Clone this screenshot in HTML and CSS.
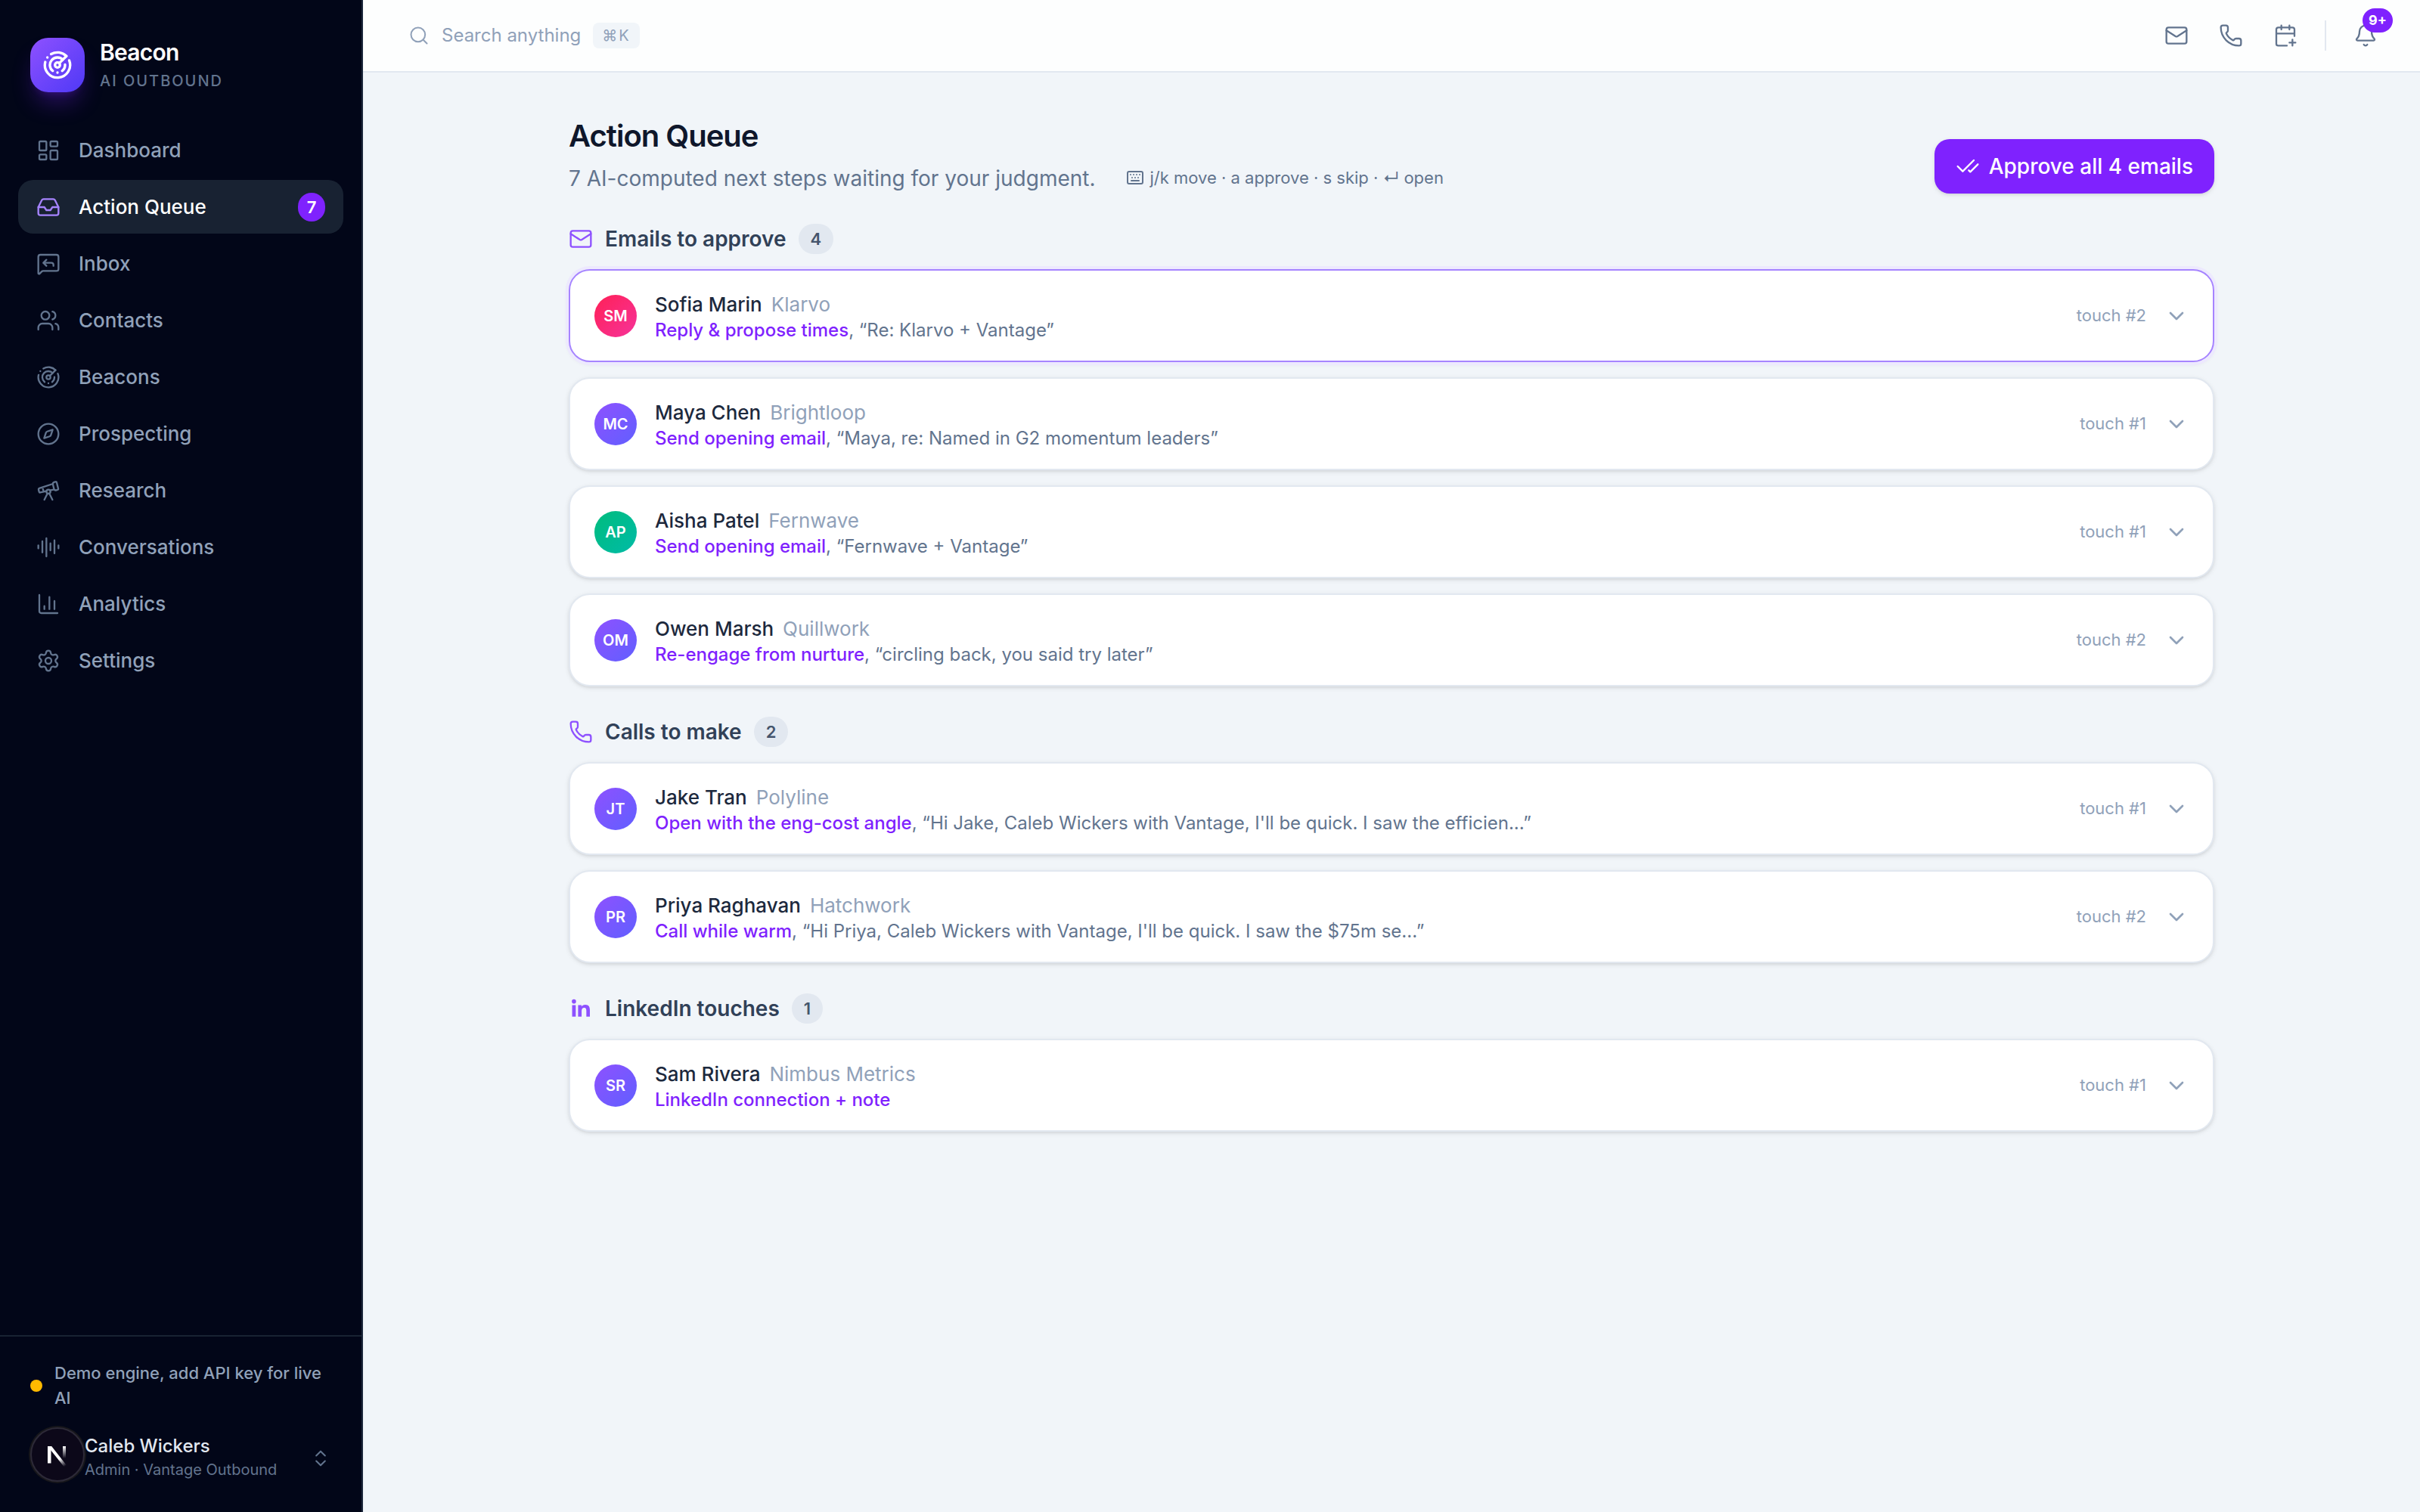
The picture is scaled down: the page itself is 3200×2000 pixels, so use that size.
FILE: index.html
```html
<!DOCTYPE html>
<html lang="en">
<head>
<meta charset="utf-8">
<title>Action Queue – Beacon</title>
<meta name="viewport" content="width=device-width, initial-scale=1">
<link rel="stylesheet" href="styles.css">
</head>
<body>
<svg class="sprite" aria-hidden="true">
  <symbol id="radar" viewBox="0 0 24 24"><path d="M19.07 4.93A10 10 0 0 0 6.99 3.34M4 6h.01M2.29 9.62A10 10 0 1 0 21.31 8.35M16.24 7.76A6 6 0 1 0 8.23 16.67M12 18h.01M17.99 11.66A6 6 0 0 1 15.77 16.67"/><circle cx="12" cy="12" r="2"/><path d="m13.41 10.59 5.66-5.66"/></symbol>
  <symbol id="dashboard" viewBox="0 0 24 24"><rect x="3" y="3" width="7" height="9" rx="1"/><rect x="14" y="3" width="7" height="5" rx="1"/><rect x="14" y="12" width="7" height="9" rx="1"/><rect x="3" y="16" width="7" height="5" rx="1"/></symbol>
  <symbol id="inbox" viewBox="0 0 24 24"><path d="M22 12h-6l-2 3h-4l-2-3H2"/><path d="M5.45 5.11 2 12v6a2 2 0 0 0 2 2h16a2 2 0 0 0 2-2v-6l-3.45-6.89A2 2 0 0 0 16.76 4H7.24a2 2 0 0 0-1.79 1.11z"/></symbol>
  <symbol id="reply" viewBox="0 0 24 24"><path d="M22 17a2 2 0 0 1-2 2H6.828a2 2 0 0 0-1.414.586l-2.202 2.202A.71.71 0 0 1 2 21.286V5a2 2 0 0 1 2-2h16a2 2 0 0 1 2 2z"/><path d="m10 8-3 3 3 3M17 14v-1a2 2 0 0 0-2-2H7"/></symbol>
  <symbol id="users" viewBox="0 0 24 24"><path d="M16 21v-2a4 4 0 0 0-4-4H6a4 4 0 0 0-4 4v2M16 3.128a4 4 0 0 1 0 7.744M22 21v-2a4 4 0 0 0-3-3.87"/><circle cx="9" cy="7" r="4"/></symbol>
  <symbol id="compass" viewBox="0 0 24 24"><circle cx="12" cy="12" r="10"/><path d="m16.24 7.76-1.804 5.411a2 2 0 0 1-1.265 1.265L7.76 16.24l1.804-5.411a2 2 0 0 1 1.265-1.265z"/></symbol>
  <symbol id="telescope" viewBox="0 0 24 24"><path d="m10.065 12.493-6.18 1.318a.934.934 0 0 1-1.108-.702l-.537-2.15a1.07 1.07 0 0 1 .691-1.265l13.504-4.44M13.56 11.747l4.332-.924M16 21l-3.105-6.21M16.485 5.94a2 2 0 0 1 1.455-2.425l1.09-.272a1 1 0 0 1 1.212.727l1.515 6.06a1 1 0 0 1-.727 1.213l-1.09.272a2 2 0 0 1-2.425-1.455zM6.158 8.633l1.114 4.456M8 21l3.105-6.21"/><circle cx="12" cy="13" r="2"/></symbol>
  <symbol id="audio" viewBox="0 0 24 24"><path d="M2 10v3M6 6v11M10 3v18M14 8v7M18 5v13M22 10v3"/></symbol>
  <symbol id="chart" viewBox="0 0 24 24"><path d="M3 3v16a2 2 0 0 0 2 2h16M18 17V9M13 17V5M8 17v-3"/></symbol>
  <symbol id="gear" viewBox="0 0 24 24"><path d="M9.671 4.136a2.34 2.34 0 0 1 4.659 0 2.34 2.34 0 0 0 3.319 1.915 2.34 2.34 0 0 1 2.33 4.033 2.34 2.34 0 0 0 0 3.831 2.34 2.34 0 0 1-2.33 4.033 2.34 2.34 0 0 0-3.319 1.915 2.34 2.34 0 0 1-4.659 0 2.34 2.34 0 0 0-3.32-1.915 2.34 2.34 0 0 1-2.33-4.033 2.34 2.34 0 0 0 0-3.831A2.34 2.34 0 0 1 6.35 6.051a2.34 2.34 0 0 0 3.319-1.915"/><circle cx="12" cy="12" r="3"/></symbol>
  <symbol id="updown" viewBox="0 0 24 24"><path d="m7 15 5 5 5-5M7 9l5-5 5 5"/></symbol>
  <symbol id="search" viewBox="0 0 24 24"><path d="m21 21-4.34-4.34"/><circle cx="11" cy="11" r="8"/></symbol>
  <symbol id="mail" viewBox="0 0 24 24"><path d="m22 7-8.991 5.727a2 2 0 0 1-2.009 0L2 7"/><rect x="2" y="4" width="20" height="16" rx="2"/></symbol>
  <symbol id="phone" viewBox="0 0 24 24"><path d="M13.832 16.568a1 1 0 0 0 1.213-.303l.355-.465A2 2 0 0 1 17 15h3a2 2 0 0 1 2 2v3a2 2 0 0 1-2 2A18 18 0 0 1 2 4a2 2 0 0 1 2-2h3a2 2 0 0 1 2 2v3a2 2 0 0 1-.8 1.6l-.468.351a1 1 0 0 0-.292 1.233 14 14 0 0 0 6.392 6.384"/></symbol>
  <symbol id="calendar" viewBox="0 0 24 24"><path d="M16 19h6M16 2v4M19 16v6M21 12.598V6a2 2 0 0 0-2-2H5a2 2 0 0 0-2 2v14a2 2 0 0 0 2 2h8.5M3 10h18M8 2v4"/></symbol>
  <symbol id="bell" viewBox="0 0 24 24"><path d="M10.268 21a2 2 0 0 0 3.464 0M3.262 15.326A1 1 0 0 0 4 17h16a1 1 0 0 0 .74-1.673C19.41 13.956 18 12.499 18 8A6 6 0 0 0 6 8c0 4.499-1.411 5.956-2.738 7.326"/></symbol>
  <symbol id="checks" viewBox="0 0 24 24"><path d="M18 6 7 17l-5-5M22 10l-7.5 7.5L13 16"/></symbol>
  <symbol id="keyboard" viewBox="0 0 24 24"><path d="M10 8h.01M12 12h.01M14 8h.01M16 12h.01M18 8h.01M6 8h.01M7 16h10M8 12h.01"/><rect x="2" y="4" width="20" height="16" rx="2"/></symbol>
  <symbol id="chevron" viewBox="0 0 24 24"><path d="m6 9 6 6 6-6"/></symbol>
  <symbol id="linkedin" viewBox="0 0 24 24"><circle cx="5.200" cy="5" r="2.100"/><path d="M3.400 8.600H7V20H3.400zM9.300 8.600h3.400v1.600c.6-1.100 1.900-1.900 3.700-1.900 3.700 0 4.600 2.300 4.600 5.500V20h-3.500v-5.600c0-1.500-.2-3.200-2.100-3.200s-2.600 1.500-2.600 3.200V20H9.300z"/></symbol>
</svg>
<div class="app">
  <aside class="sidebar">
    <div class="brand">
      <span class="brand-mark"><svg class="icon"><use href="#radar"/></svg></span>
      <div>
        <div class="brand-name">Beacon</div>
        <div class="brand-tag">AI Outbound</div>
      </div>
    </div>
    <nav class="nav" aria-label="Main">
      <a class="nav-item" href="#"><svg class="icon"><use href="#dashboard"/></svg>Dashboard</a>
      <a class="nav-item active" href="#" aria-current="page"><svg class="icon"><use href="#inbox"/></svg>Action Queue<span class="nav-count">7</span></a>
      <a class="nav-item" href="#"><svg class="icon"><use href="#reply"/></svg>Inbox</a>
      <a class="nav-item" href="#"><svg class="icon"><use href="#users"/></svg>Contacts</a>
      <a class="nav-item" href="#"><svg class="icon"><use href="#radar"/></svg>Beacons</a>
      <a class="nav-item" href="#"><svg class="icon"><use href="#compass"/></svg>Prospecting</a>
      <a class="nav-item" href="#"><svg class="icon"><use href="#telescope"/></svg>Research</a>
      <a class="nav-item" href="#"><svg class="icon"><use href="#audio"/></svg>Conversations</a>
      <a class="nav-item" href="#"><svg class="icon"><use href="#chart"/></svg>Analytics</a>
      <a class="nav-item" href="#"><svg class="icon"><use href="#gear"/></svg>Settings</a>
    </nav>
    <div class="side-foot">
      <div class="engine"><span class="dot"></span><span>Demo engine, add API key for live AI</span></div>
      <button class="account" type="button">
        <svg class="n-mark" viewBox="0 0 76 76" aria-hidden="true">
          <defs>
            <linearGradient id="n-diag" gradientUnits="userSpaceOnUse" x1="40" y1="38" x2="50" y2="52"><stop offset="0.3" stop-color="#fff"/><stop offset="1" stop-color="#fff" stop-opacity="0"/></linearGradient>
            <linearGradient id="n-bar" gradientUnits="userSpaceOnUse" x1="0" y1="27" x2="0" y2="43"><stop offset="0" stop-color="#fff"/><stop offset="1" stop-color="#fff" stop-opacity="0"/></linearGradient>
          </defs>
          <circle cx="38" cy="38" r="38" fill="#17171b"/>
          <circle cx="38" cy="38" r="35" fill="#0c0819" stroke="#2d2a38" stroke-width="2"/>
          <path d="M25 27h4.500v22.500H25z" fill="#fff"/>
          <path d="M25 27h5.200L50.500 53l-3 2.200L25 27z" fill="url(#n-diag)"/>
          <path d="M45 27h4v16h-4z" fill="url(#n-bar)"/>
        </svg>
        <span class="account-text"><span class="account-name">Caleb Wickers</span><span class="account-role">Admin · Vantage Outbound</span></span>
        <svg class="icon icon-updown"><use href="#updown"/></svg>
      </button>
    </div>
  </aside>
  <div class="page">
    <header class="topbar">
      <button class="search" type="button"><svg class="icon"><use href="#search"/></svg>Search anything<kbd>⌘K</kbd></button>
      <div class="tools">
        <button class="tool" type="button" aria-label="New email"><svg class="icon"><use href="#mail"/></svg></button>
        <button class="tool" type="button" aria-label="New call"><svg class="icon"><use href="#phone"/></svg></button>
        <button class="tool" type="button" aria-label="New meeting"><svg class="icon"><use href="#calendar"/></svg></button>
        <span class="divider"></span>
        <button class="tool" type="button" aria-label="Notifications"><svg class="icon"><use href="#bell"/></svg><span class="tool-badge">9+</span></button>
      </div>
    </header>
    <main class="content">
      <div class="head">
        <div>
          <h1>Action Queue</h1>
          <div class="sub">
            <p>7 AI-computed next steps waiting for your judgment.</p>
            <span class="hint"><svg class="icon"><use href="#keyboard"/></svg>j/k move · a approve · s skip · ↵ open</span>
          </div>
        </div>
        <button class="primary" type="button"><svg class="icon"><use href="#checks"/></svg>Approve all 4 emails</button>
      </div>

      <section class="group">
        <h2><svg class="icon"><use href="#mail"/></svg>Emails to approve<span class="count">4</span></h2>
        <button class="card selected" type="button"><span class="avatar rose">SM</span><span class="info"><span class="who">Sofia Marin<span class="org">Klarvo</span></span><span class="what"><b>Reply &amp; propose times</b>, “Re: Klarvo + Vantage”</span></span><span class="touch">touch #2</span><svg class="icon"><use href="#chevron"/></svg></button>
        <button class="card" type="button"><span class="avatar">MC</span><span class="info"><span class="who">Maya Chen<span class="org">Brightloop</span></span><span class="what"><b>Send opening email</b>, “Maya, re: Named in G2 momentum leaders”</span></span><span class="touch">touch #1</span><svg class="icon"><use href="#chevron"/></svg></button>
        <button class="card" type="button"><span class="avatar green">AP</span><span class="info"><span class="who">Aisha Patel<span class="org">Fernwave</span></span><span class="what"><b>Send opening email</b>, “Fernwave + Vantage”</span></span><span class="touch">touch #1</span><svg class="icon"><use href="#chevron"/></svg></button>
        <button class="card" type="button"><span class="avatar">OM</span><span class="info"><span class="who">Owen Marsh<span class="org">Quillwork</span></span><span class="what"><b>Re-engage from nurture</b>, “circling back, you said try later”</span></span><span class="touch">touch #2</span><svg class="icon"><use href="#chevron"/></svg></button>
      </section>

      <section class="group">
        <h2><svg class="icon"><use href="#phone"/></svg>Calls to make<span class="count">2</span></h2>
        <button class="card" type="button"><span class="avatar">JT</span><span class="info"><span class="who">Jake Tran<span class="org">Polyline</span></span><span class="what"><b>Open with the eng-cost angle</b>, “Hi Jake, Caleb Wickers with Vantage, I'll be quick. I saw the efficien...”</span></span><span class="touch">touch #1</span><svg class="icon"><use href="#chevron"/></svg></button>
        <button class="card" type="button"><span class="avatar">PR</span><span class="info"><span class="who">Priya Raghavan<span class="org">Hatchwork</span></span><span class="what"><b>Call while warm</b>, “Hi Priya, Caleb Wickers with Vantage, I'll be quick. I saw the $75m se...”</span></span><span class="touch">touch #2</span><svg class="icon"><use href="#chevron"/></svg></button>
      </section>

      <section class="group">
        <h2><svg class="icon icon-fill"><use href="#linkedin"/></svg>LinkedIn touches<span class="count">1</span></h2>
        <button class="card" type="button"><span class="avatar">SR</span><span class="info"><span class="who">Sam Rivera<span class="org">Nimbus Metrics</span></span><span class="what"><b>LinkedIn connection + note</b></span></span><span class="touch">touch #1</span><svg class="icon"><use href="#chevron"/></svg></button>
      </section>
    </main>
  </div>
</div>
</body>
</html>
```
FILE: styles.css
```css
* { box-sizing: border-box; }
body {
  margin: 0;
  font-family: Inter, "Liberation Sans", sans-serif;
  font-size: 26px;
  line-height: 1.5;
  color: #1d293d;
  background: #f1f5f9;
}
button { font: inherit; color: inherit; background: none; border: 0; padding: 0; text-align: left; cursor: pointer; }
a { color: inherit; text-decoration: none; }
h1, h2, p { margin: 0; }
.sprite { position: absolute; width: 0; height: 0; }
.icon { width: 32px; height: 32px; flex: none; fill: none; stroke: currentColor; stroke-width: 1.75; stroke-linecap: round; stroke-linejoin: round; }
.icon-fill { fill: currentColor; stroke: none; }

.app { display: flex; min-height: 100vh; }

/* Sidebar */
.sidebar { width: 480px; flex: none; display: flex; flex-direction: column; background: #020618; border-right: 2px solid #1d293d; }
.brand { display: flex; align-items: center; gap: 20px; padding: 48px 40px 39px; }
.brand-mark { display: grid; place-items: center; width: 72px; height: 72px; border-radius: 24px; color: #fff; background: linear-gradient(135deg, #8e51ff, #4f39f6); box-shadow: 0 20px 30px -6px rgb(127 34 254 / 0.3), 0 8px 12px -8px rgb(127 34 254 / 0.3); }
.brand-mark .icon { width: 40px; height: 40px; stroke-width: 2; }
.brand-name { font-size: 30px; line-height: 42px; font-weight: 600; color: #fff; letter-spacing: -0.025em; }
.brand-tag { font-size: 20px; line-height: 34px; font-weight: 500; color: #62748e; letter-spacing: 0.1em; text-transform: uppercase; }
.nav { flex: 1; display: flex; flex-direction: column; gap: 4px; padding: 0 24px; }
.nav-item { display: flex; align-items: center; gap: 24px; height: 71px; padding: 0 24px; border-radius: 20px; font-weight: 500; color: #90a1b9; }
.nav-item .icon { color: #62748e; }
.nav-item.active { background: #182232; color: #fff; }
.nav-item.active .icon { color: #a684ff; }
.nav-count { margin-left: auto; min-width: 36px; padding: 0 11px; border-radius: 20px; background: #7f22fe; color: #fff; font-size: 22px; line-height: 38px; font-weight: 600; text-align: center; }
.side-foot { border-top: 2px solid #182232; padding: 32px 40px 38px; }
.engine { display: flex; align-items: center; gap: 16px; font-size: 22px; font-weight: 500; color: #90a1b9; }
.dot { width: 16px; height: 16px; flex: none; border-radius: 50%; background: #ffb900; }
.account { display: flex; align-items: center; width: 100%; margin-top: 20px; }
.n-mark { width: 76px; height: 76px; flex: none; margin: 0 -2px; }
.account-text { flex: 1; display: flex; flex-direction: column; padding-top: 6px; }
.account-name { font-size: 24px; line-height: 34px; font-weight: 500; color: #e2e8f0; }
.account-role { font-size: 20px; line-height: 28px; color: #62748e; }
.icon-updown { width: 28px; height: 28px; margin-top: 10px; color: #62748e; }

/* Top bar */
.page { flex: 1; min-width: 0; }
.topbar { display: flex; align-items: center; justify-content: space-between; height: 96px; padding: 0 40px 0 60px; background: #fdfefe; border-bottom: 2px solid #e2e8f0; }
.search { display: flex; align-items: center; gap: 16px; color: #90a1b9; font-size: 24px; }
.search .icon { width: 28px; height: 28px; }
.search kbd { font: inherit; font-size: 20px; line-height: 34px; letter-spacing: 0.1em; padding: 0 12px; border-radius: 8px; background: #f1f5f9; }
.tools { display: flex; align-items: center; gap: 8px; color: #62748e; }
.tool { position: relative; display: grid; place-items: center; width: 64px; height: 64px; }
.divider { width: 2px; height: 40px; margin: 0 12px; background: #e2e8f0; }
.tool-badge { position: absolute; top: -4px; left: 28px; width: 40px; border-radius: 16px; background: #7f22fe; color: #fff; font-size: 18px; line-height: 32px; font-weight: 700; text-align: center; }

/* Content */
.content { max-width: 2304px; margin: 0 auto; padding: 56px 64px; }
.head { display: flex; align-items: flex-end; justify-content: space-between; }
h1 { font-size: 40px; line-height: 56px; font-weight: 600; letter-spacing: -0.025em; color: #0f172b; }
.sub { display: flex; align-items: center; gap: 40px; margin-top: 8px; color: #62748e; font-size: 28px; line-height: 40px; }
.hint { display: flex; align-items: center; gap: 8px; font-size: 22px; line-height: 36px; padding-bottom: 2px; }
.hint .icon { width: 24px; height: 24px; stroke-width: 2; }
.primary { display: flex; align-items: center; gap: 12px; height: 72px; padding: 0 28px; border-radius: 20px; background: #7f22fe; color: #fff; font-size: 28px; font-weight: 500; box-shadow: 0 2px 6px rgb(0 0 0 / 0.1), 0 2px 4px -2px rgb(0 0 0 / 0.1); }
.group { display: flex; flex-direction: column; gap: 20px; margin-top: 40px; }
h2 { display: flex; align-items: center; gap: 16px; font-size: 28px; line-height: 40px; font-weight: 600; color: #314158; }
h2 .icon { color: #8e51ff; }
.count { padding: 0 16px; border-radius: 20px; background: #e2e8f0; color: #45556c; font-size: 22px; line-height: 40px; }
.card { display: flex; align-items: center; gap: 24px; width: 100%; height: 123px; padding: 0 32px; border: 2px solid #e2e8f0; border-radius: 28px; background: #fff; box-shadow: 0 2px 6px rgb(0 0 0 / 0.1), 0 2px 4px -2px rgb(0 0 0 / 0.1); }
.card.selected { border-color: #a684ff; box-shadow: 0 0 0 4px #ede9fe, 0 2px 6px rgb(0 0 0 / 0.1); }
.card > .icon { color: #90a1b9; stroke-width: 2; }
.avatar { display: grid; place-items: center; width: 56px; height: 56px; flex: none; border-radius: 50%; color: #fff; font-size: 20px; font-weight: 600; background: linear-gradient(135deg, #8e51ff, #615fff); }
.avatar.rose { background: linear-gradient(135deg, #ff2056, #f6339a); }
.avatar.green { background: linear-gradient(135deg, #00bc7d, #00bba7); }
.info { flex: 1; min-width: 0; display: flex; flex-direction: column; padding-top: 4px; }
.who { display: flex; gap: 12px; font-size: 26px; line-height: 34px; font-weight: 500; }
.org { font-weight: 400; color: #90a1b9; }
.what { font-size: 24px; line-height: 34px; color: #62748e; overflow: hidden; text-overflow: ellipsis; white-space: nowrap; }
.what b { font-weight: 500; color: #7f22fe; }
.touch { font-size: 22px; color: #90a1b9; }
```
